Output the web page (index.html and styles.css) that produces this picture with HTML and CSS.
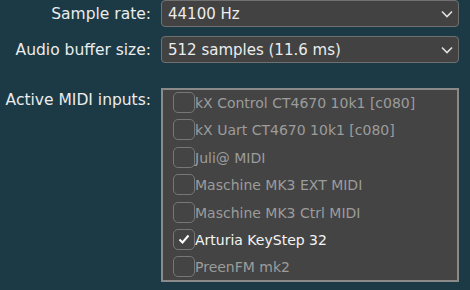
FILE: index.html
```html
<!DOCTYPE html>
<html>
	<head>
		<meta name="viewport" content="width=device-width, initial-scale=1" />
		<link rel="stylesheet" href="styles.css">
	</head>
	<body>
		<div class="settings">
			<label class="label">Sample rate:</label>
			<div class="combo">
				<span>44100 Hz</span>
				<svg class="chevron" width="12" height="8" viewBox="0 0 12 8"><path d="M1 1.5 L6 6.5 L11 1.5" fill="none" stroke="#e0e0e0" stroke-width="1.6"/></svg>
			</div>

			<label class="label">Audio buffer size:</label>
			<div class="combo">
				<span>512 samples (11.6 ms)</span>
				<svg class="chevron" width="12" height="8" viewBox="0 0 12 8"><path d="M1 1.5 L6 6.5 L11 1.5" fill="none" stroke="#e0e0e0" stroke-width="1.6"/></svg>
			</div>

			<label class="label label-list">Active MIDI inputs:</label>
			<div class="listbox">
				<div class="item"><span class="box"></span>kX Control CT4670 10k1 [c080]</div>
				<div class="item"><span class="box"></span>kX Uart CT4670 10k1 [c080]</div>
				<div class="item"><span class="box"></span>Juli@ MIDI</div>
				<div class="item"><span class="box"></span>Maschine MK3 EXT MIDI</div>
				<div class="item"><span class="box"></span>Maschine MK3 Ctrl MIDI</div>
				<div class="item checked"><span class="box"><svg width="14" height="12" viewBox="0 0 14 12"><path d="M2.5 6.5 L5.5 9.5 L11.5 2.5" fill="none" stroke="#ffffff" stroke-width="2"/></svg></span>Arturia KeyStep 32</div>
				<div class="item"><span class="box"></span>PreenFM mk2</div>
			</div>
		</div>
	</body>
</html>
```

FILE: styles.css
```css
body {
    margin: 0;
    background-color: #1b3a46;
    font-family: "DejaVu Sans", Verdana, sans-serif;
    font-size: 14px;
    color: #ececec;
}

.settings {
    display: grid;
    grid-template-columns: 151px 298px;
    column-gap: 10px;
    row-gap: 9px;
    align-items: center;
}

.label {
    text-align: right;
    font-size: 15.5px;
}

.label-list {
    align-self: start;
    padding-top: 19px;
}

.combo {
    height: 27px;
    box-sizing: border-box;
    background-color: #424242;
    border: 1px solid #707070;
    border-radius: 4px;
    display: flex;
    align-items: center;
    justify-content: space-between;
    padding: 0 5px 0 6px;
    font-size: 15px;
}

.listbox {
    margin-top: 16px;
    height: 194px;
    box-sizing: border-box;
    background-color: #444444;
    border: 2px solid #8a8a8a;
    padding: 0 0 0 10px;
}

.item {
    height: 27.4px;
    display: flex;
    align-items: flex-start;
    color: #9c9c9c;
    line-height: 27px;
}

.item.checked {
    color: #f4f4f4;
}

.box {
    width: 22px;
    height: 21px;
    margin-top: 2px;
    box-sizing: border-box;
    border: 1.5px solid #777777;
    border-radius: 5px;
    display: flex;
    align-items: center;
    justify-content: center;
}
```
